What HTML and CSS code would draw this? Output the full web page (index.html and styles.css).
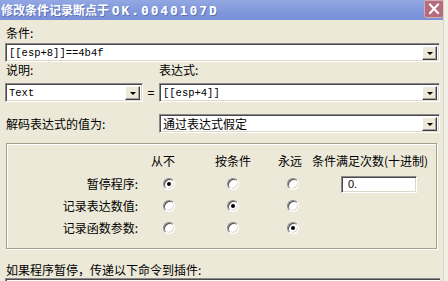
FILE: index.html
```html
<!DOCTYPE html>
<html lang="zh-CN">
<head>
    <meta charset="UTF-8">
    <meta name="viewport" content="width=device-width, initial-scale=1.0">
    <title>修改条件记录断点</title>
    <link rel="stylesheet" href="styles.css">
</head>
<body>
    <div class="window">
        <!-- Title bar -->
        <div class="titlebar">
            <span class="title">修改条件记录断点于 <span class="addr">OK.0040107D</span></span>
            <span class="close">
                <svg width="20" height="18" viewBox="0 0 20 18">
                    <rect x="0.5" y="0.5" width="19" height="17" rx="2" fill="#b56d7d" stroke="#d9a9b4"/>
                    <path d="M6 4.5 L14 13 M14 4.5 L6 13" stroke="#fff" stroke-width="2" stroke-linecap="square"/>
                </svg>
            </span>
        </div>

        <div class="dialog">
            <!-- Condition -->
            <div class="caption cond-caption">条件:</div>
            <div class="combo combo-wide">
                <span class="value mono">[[esp+8]]==4b4f</span>
                <span class="drop"></span>
            </div>

            <!-- Explanation / expression -->
            <div class="caption-row">
                <span class="caption-left">说明:</span>
                <span>表达式:</span>
            </div>
            <div class="combo-row">
                <div class="combo combo-short">
                    <span class="value mono">Text</span>
                    <span class="drop"></span>
                </div>
                <span class="equals">=</span>
                <div class="combo combo-expr">
                    <span class="value mono">[[esp+4]]</span>
                    <span class="drop"></span>
                </div>
            </div>

            <div class="decode-row">
                <span class="decode-label">解码表达式的值为:</span>
                <div class="combo combo-expr">
                    <span class="value cjk">通过表达式假定</span>
                    <span class="drop"></span>
                </div>
            </div>

            <!-- Pause / log options -->
            <div class="groupbox">
                <div class="grid">
                    <span></span>
                    <span class="head head-never">从不</span>
                    <span class="head">按条件</span>
                    <span class="head head-always">永远</span>
                    <span class="head head-count">条件满足次数(十进制)</span>

                    <span class="row-label">暂停程序:</span>
                    <span class="radio checked"></span>
                    <span class="radio"></span>
                    <span class="radio"></span>
                    <span class="count-cell"><span class="edit">0.</span></span>

                    <span class="row-label">记录表达数值:</span>
                    <span class="radio"></span>
                    <span class="radio checked"></span>
                    <span class="radio"></span>
                    <span></span>

                    <span class="row-label">记录函数参数:</span>
                    <span class="radio"></span>
                    <span class="radio"></span>
                    <span class="radio checked"></span>
                    <span></span>
                </div>
            </div>

            <div class="caption plugin-caption">如果程序暂停，传递以下命令到插件:</div>
            <div class="plugin"></div>
        </div>
    </div>
</body>
</html>
```

FILE: styles.css
```css
body {
    margin: 0;
    padding: 0;
    width: 448px;
    height: 281px;
    overflow: hidden;
    background-color: #f1efe6;
    font-family: "Noto Sans CJK SC", "Liberation Sans", sans-serif;
    font-size: 12px;
    color: #000;
}

.window {
    width: 443px;
    height: 281px;
    overflow: hidden;
    background-color: #ece9d8;
    border-right: 1px solid #d8d4c4;
}

/* Title bar */
.titlebar {
    height: 20px;
    display: flex;
    align-items: center;
    justify-content: space-between;
    background: linear-gradient(to bottom, #93a8e2, #7f96da 60%, #7890d8);
    color: #fff;
}

.title {
    padding-left: 1px;
    font-weight: 700;
    font-size: 12px;
    line-height: 20px;
    white-space: nowrap;
    text-shadow: 1px 1px 0 rgba(60, 80, 150, 0.5);
}

.addr {
    font-family: "DejaVu Sans Mono", monospace;
    font-size: 13px;
    letter-spacing: 1.9px;
}

.close {
    display: flex;
    margin-right: -1px;
    align-self: flex-start;
}

/* Dialog body */
.dialog {
    padding-left: 5px;
    width: 435px;
}

.caption {
    line-height: 14px;
    padding-left: 1px;
}

.cond-caption {
    height: 17px;
    padding-top: 6px;
}

.caption-row {
    display: flex;
    height: 20px;
    padding-top: 1px;
    line-height: 14px;
}

.caption-left {
    width: 153px;
    padding-left: 1px;
}

.combo-row {
    display: flex;
    align-items: center;
}

.equals {
    width: 16px;
    text-align: center;
    font-family: "Liberation Sans", sans-serif;
    font-size: 12px;
}

.decode-row {
    display: flex;
    align-items: center;
    justify-content: space-between;
    margin-top: 12px;
}

.decode-label {
    padding-left: 1px;
    line-height: 14px;
}

/* Sunken combo boxes */
.combo {
    box-sizing: border-box;
    height: 19px;
    display: flex;
    align-items: center;
    justify-content: space-between;
    background-color: #fff;
    border: 1px solid;
    border-color: #8a8a8a #fff #fff #8a8a8a;
    box-shadow: inset 1px 1px 0 #4a4a4a, inset -1px -1px 0 #dcd9cc;
    padding: 0 2px 0 3px;
}

.combo-wide {
    width: 435px;
}

.combo-short {
    width: 138px;
}

.combo-expr {
    width: 281px;
}

.value {
    white-space: nowrap;
}

.mono {
    font-family: "Liberation Mono", monospace;
    font-size: 10.5px;
    padding-top: 1px;
}

.cjk {
    line-height: 14px;
}

.drop {
    box-sizing: border-box;
    width: 15px;
    height: 14px;
    display: flex;
    align-items: center;
    justify-content: center;
    background-color: #ece9d8;
    border: 1px solid;
    border-color: #fff #404040 #404040 #fff;
    box-shadow: inset -1px -1px 0 #a0a0a0;
}

.drop::after {
    content: "";
    border-left: 3px solid transparent;
    border-right: 3px solid transparent;
    border-top: 3px solid #000;
    margin-top: 1px;
}

/* Group box */
.groupbox {
    box-sizing: border-box;
    width: 431px;
    height: 106px;
    margin-top: 10px;
    margin-left: 1px;
    border: 1px solid #a3a090;
    box-shadow: inset 1px 1px 0 #fff, 1px 1px 0 #fff;
    padding-top: 6px;
}

.grid {
    display: grid;
    grid-template-columns: 143px 38px 90px 30px 1fr;
    grid-template-rows: 22px 22px 22px 22px;
    align-items: center;
}

.grid > :nth-child(n+6) {
    margin-top: 2px;
}

.head {
    text-align: center;
    white-space: nowrap;
    line-height: 14px;
}

.head-never {
    padding-right: 12px;
}

.head-always {
    padding-right: 6px;
}

.head-count {
    text-align: left;
    padding-left: 4px;
}

.row-label {
    text-align: right;
    padding-right: 12px;
    line-height: 14px;
}

.radio {
    box-sizing: border-box;
    justify-self: center;
    width: 12px;
    height: 12px;
    border-radius: 50%;
    border: 1px solid;
    border-color: #8a8a8a #fff #fff #8a8a8a;
    background-color: #fff;
    box-shadow: inset 1px 1px 0 #505050, inset -1px -1px 0 #dcd9cc;
    display: flex;
    align-items: center;
    justify-content: center;
}

.radio.checked::after {
    content: "";
    width: 4px;
    height: 4px;
    border-radius: 50%;
    background-color: #000;
}

.count-cell {
    padding-left: 33px;
}

.edit {
    box-sizing: border-box;
    display: flex;
    align-items: center;
    width: 76px;
    height: 17px;
    padding-left: 6px;
    background-color: #fff;
    border: 1px solid;
    border-color: #8a8a8a #fff #fff #8a8a8a;
    box-shadow: inset 1px 1px 0 #4a4a4a, inset -1px -1px 0 #dcd9cc;
    font-family: "Liberation Sans", sans-serif;
    font-size: 11px;
}

.plugin-caption {
    height: 15px;
    padding-top: 14px;
}

/* only the top edge of the command box is visible */
.plugin {
    box-sizing: border-box;
    width: 435px;
    height: 3px;
    background-color: #fff;
    border-top: 1px solid #8a8a8a;
    border-left: 1px solid #8a8a8a;
    box-shadow: inset 1px 1px 0 #4a4a4a;
}
```
